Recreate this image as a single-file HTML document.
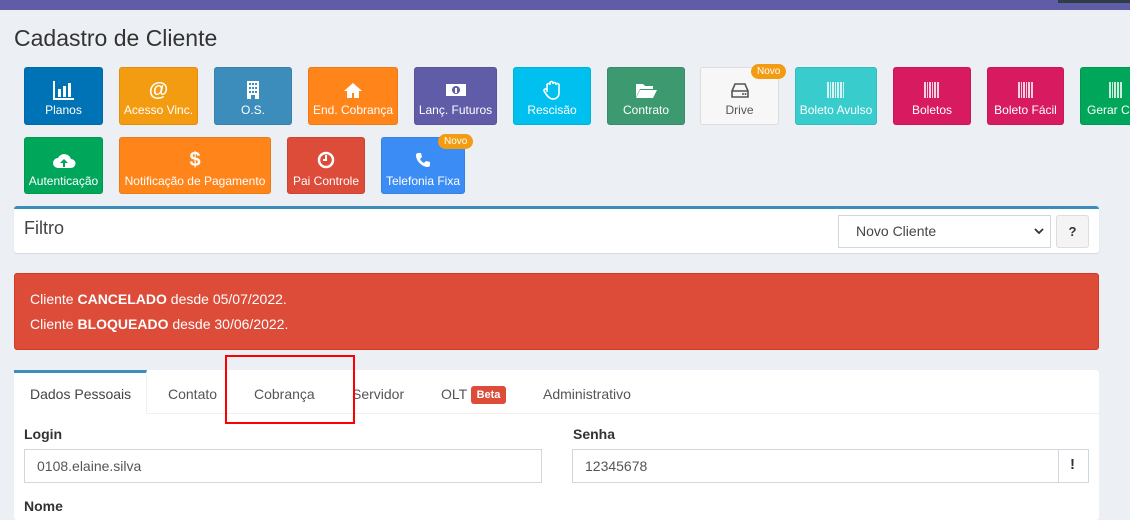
<!DOCTYPE html><html><head><meta charset="utf-8"><style>
*{box-sizing:border-box;margin:0;padding:0}
body{width:1130px;height:510px;overflow:hidden;background:#ecf0f5;font-family:"Liberation Sans",sans-serif;position:relative;color:#333}
.a{position:absolute}
.btn{position:absolute;color:#fff;font-size:12px;text-align:center;border-radius:3px;border:1px solid rgba(0,0,0,.08)}
.btn .ic{position:absolute;left:0;right:0;top:13px;height:18px;display:flex;justify-content:center;align-items:center;font-weight:bold;font-size:17px}
.btn .t{position:absolute;left:0;right:0;top:35px;white-space:nowrap;overflow:hidden}
.r2 .t{top:36px}
.nv{position:absolute;background:#f39c12;color:#fff;font-size:10px;padding:2px 6px;border-radius:8px}
.bar{display:inline-block;width:2px;height:16px;margin-right:1px;background:currentColor;opacity:.8}
</style></head><body>
<div class="a" style="left:0;top:0;width:1130px;height:10px;background:#605ca8"></div>
<div class="a" style="left:1058px;top:0;width:72px;height:3px;background:#2f3d45"></div>
<div class="a" style="left:14px;top:25px;font-size:23px;color:#333">Cadastro de Cliente</div>

<div class="btn" style="left:24px;top:67px;width:79px;height:58px;background:#0073b7"><div class="ic"><svg width="22" height="20" viewBox="0 0 22 20"><path d="M1 1v18h20" stroke="#fff" stroke-width="2" fill="none"/><rect x="5" y="9" width="3" height="8" fill="#fff"/><rect x="10" y="6" width="3" height="11" fill="#fff"/><rect x="15" y="3" width="3" height="14" fill="#fff"/></svg></div><div class="t">Planos</div></div>
<div class="btn" style="left:119px;top:67px;width:79px;height:58px;background:#f39c12"><div class="ic" style="font-size:20px">@</div><div class="t">Acesso Vinc.</div></div>
<div class="btn" style="left:214px;top:67px;width:78px;height:58px;background:#3c8dbc"><div class="ic"><svg width="14" height="20"><rect x="1" y="1" width="12" height="18" fill="#fff"/><g fill="#3c8dbc"><rect x="3" y="3" width="2" height="2"/><rect x="6" y="3" width="2" height="2"/><rect x="9" y="3" width="2" height="2"/><rect x="3" y="7" width="2" height="2"/><rect x="6" y="7" width="2" height="2"/><rect x="9" y="7" width="2" height="2"/><rect x="3" y="11" width="2" height="2"/><rect x="6" y="11" width="2" height="2"/><rect x="9" y="11" width="2" height="2"/><rect x="5" y="15" width="4" height="4"/></g></svg></div><div class="t">O.S.</div></div>
<div class="btn" style="left:308px;top:67px;width:90px;height:58px;background:#ff851b"><div class="ic"><svg width="20" height="17"><path d="M10 1L1 9h3v7h5v-5h2v5h5V9h3z" fill="#fff"/></svg></div><div class="t">End. Cobrança</div></div>
<div class="btn" style="left:414px;top:67px;width:83px;height:58px;background:#605ca8"><div class="ic"><svg width="22" height="14"><rect x="1" y="1" width="20" height="12" fill="#fff"/><circle cx="11" cy="7" r="4" fill="#605ca8"/><rect x="10" y="5" width="2" height="5" fill="#fff"/></svg></div><div class="t">Lanç. Futuros</div></div>
<div class="btn" style="left:513px;top:67px;width:78px;height:58px;background:#00c0ef"><div class="ic"><svg width="18" height="20"><path d="M4 12V5a1.3 1.3 0 013 0V3a1.3 1.3 0 013 0v1a1.3 1.3 0 013 0v1a1.3 1.3 0 013 0v8c0 4-3 6-6 6s-5-2-7-5l-2-3a1.3 1.3 0 013-1z" fill="none" stroke="#fff" stroke-width="1.6"/></svg></div><div class="t">Rescisão</div></div>
<div class="btn" style="left:607px;top:67px;width:78px;height:58px;background:#3d9970"><div class="ic"><svg width="22" height="17"><path d="M1 2h7l2 2h8v3H5L1 15z" fill="#fff"/><path d="M5 8h17l-4 8H1z" fill="#fff"/></svg></div><div class="t">Contrato</div></div>
<div class="btn" style="left:700px;top:67px;width:79px;height:58px;background:#f7f7f7;color:#555;border-color:#ddd"><div class="ic"><svg width="18" height="16"><path d="M4 2h10l3 7v6H1V9z M1 9h16" fill="none" stroke="#555" stroke-width="1.6"/><circle cx="12" cy="12" r="1" fill="#555"/><circle cx="14.5" cy="12" r="1" fill="#555"/></svg></div><div class="t" style="color:#555">Drive</div></div>
<div class="nv" style="left:751px;top:64px">Novo</div>
<div class="btn" style="left:795px;top:67px;width:82px;height:58px;background:#39cccc"><div class="ic"><span class="bar"></span><span class="bar" style="width:1px"></span><span class="bar"></span><span class="bar" style="width:1px"></span><span class="bar"></span><span class="bar"></span><span class="bar" style="width:1px"></span></div><div class="t">Boleto Avulso</div></div>
<div class="btn" style="left:893px;top:67px;width:78px;height:58px;background:#d81b60"><div class="ic"><span class="bar"></span><span class="bar" style="width:1px"></span><span class="bar"></span><span class="bar" style="width:1px"></span><span class="bar"></span><span class="bar"></span></div><div class="t">Boletos</div></div>
<div class="btn" style="left:987px;top:67px;width:77px;height:58px;background:#d81b60"><div class="ic"><span class="bar"></span><span class="bar" style="width:1px"></span><span class="bar"></span><span class="bar" style="width:1px"></span><span class="bar"></span><span class="bar"></span></div><div class="t">Boleto Fácil</div></div>
<div class="btn" style="left:1080px;top:67px;width:80px;height:58px;background:#00a65a;text-align:left"><div class="ic" style="justify-content:flex-start;padding-left:28px"><span class="bar"></span><span class="bar" style="width:1px"></span><span class="bar"></span><span class="bar"></span><span class="bar"></span></div><div class="t" style="left:6px">Gerar C</div></div>

<div class="btn r2" style="left:24px;top:137px;width:79px;height:57px;background:#00a65a"><div class="ic"><svg width="24" height="17"><path d="M6 16a5 5 0 010-10 7 7 0 0113 1 4.5 4.5 0 010 9z" fill="#fff"/><path d="M12 7l-4 4h3v4h2v-4h3z" fill="#00a65a"/></svg></div><div class="t">Autenticação</div></div>
<div class="btn r2" style="left:119px;top:137px;width:152px;height:57px;background:#ff851b"><div class="ic" style="font-size:20px">$</div><div class="t">Notificação de Pagamento</div></div>
<div class="btn r2" style="left:287px;top:137px;width:78px;height:57px;background:#dd4b39"><div class="ic"><svg width="18" height="18"><circle cx="9" cy="9" r="7" fill="none" stroke="#fff" stroke-width="2.5"/><path d="M9 4v5H6" stroke="#fff" stroke-width="2" fill="none"/></svg></div><div class="t">Pai Controle</div></div>
<div class="btn r2" style="left:381px;top:137px;width:84px;height:57px;background:#3c8cf5"><div class="ic"><svg width="16" height="16"><path d="M3 1l3 0 1 4-2 2c1 2 2 3 4 4l2-2 4 1v3c0 1-1 2-2 2C7 15 1 9 1 3c0-1 1-2 2-2z" fill="#fff"/></svg></div><div class="t">Telefonia Fixa</div></div>
<div class="nv" style="left:438px;top:134px">Novo</div>

<div class="a" style="left:14px;top:206px;width:1085px;height:47px;background:#fff;border-top:3px solid #3c8dbc;border-radius:3px;box-shadow:0 1px 1px rgba(0,0,0,.1)"></div>
<div class="a" style="left:24px;top:218px;font-size:18px;color:#444">Filtro</div>
<div class="a" style="left:838px;top:215px;width:213px;height:33px;border:1px solid #d2d6de;background:#fff;font-size:14px;padding:7px 0 0 17px;color:#444">Novo Cliente<svg class="a" style="left:195px;top:12px" width="10" height="8"><path d="M1 1l4 4 4-4" stroke="#333" stroke-width="1.8" fill="none"/></svg></div>
<div class="a" style="left:1056px;top:215px;width:33px;height:33px;border:1px solid #ddd;background:#f4f4f4;border-radius:3px;font-size:13px;font-weight:bold;text-align:center;line-height:31px;color:#333">?</div>

<div class="a" style="left:14px;top:273px;width:1085px;height:77px;background:#dd4b39;border:1px solid #d73925;border-radius:3px;color:#fff;font-size:14px;padding:13px 0 0 15px;line-height:25px">Cliente <b>CANCELADO</b> desde 05/07/2022.<br>Cliente <b>BLOQUEADO</b> desde 30/06/2022.</div>

<div class="a" style="left:14px;top:370px;width:1085px;height:150px;background:#fff;border-radius:3px"></div>
<div class="a" style="left:147px;top:413px;width:952px;height:1px;background:#f0f0f0"></div>
<div class="a" style="left:14px;top:370px;width:133px;height:44px;border-top:3px solid #3c8dbc;border-right:1px solid #f0f0f0"></div>
<div class="a" style="top:386px;font-size:14px;color:#444;left:30px">Dados Pessoais</div>
<div class="a" style="top:386px;font-size:14px;color:#555;left:168px">Contato</div>
<div class="a" style="top:386px;font-size:14px;color:#555;left:254px">Cobrança</div>
<div class="a" style="top:386px;font-size:14px;color:#555;left:352px">Servidor</div>
<div class="a" style="top:386px;font-size:14px;color:#555;left:441px">OLT</div>
<div class="a" style="top:386px;left:471px;width:35px;height:18px;background:#dd4b39;color:#fff;font-size:11px;font-weight:bold;text-align:center;line-height:18px;border-radius:3px">Beta</div>
<div class="a" style="top:386px;font-size:14px;color:#555;left:543px">Administrativo</div>
<div class="a" style="left:225px;top:355px;width:130px;height:69px;border:2px solid #ff0000"></div>

<div class="a" style="left:24px;top:426px;font-size:14px;font-weight:bold;color:#333">Login</div>
<div class="a" style="left:24px;top:449px;width:518px;height:34px;border:1px solid #d2d6de;font-size:14px;padding:8px 12px;color:#555">0108.elaine.silva</div>
<div class="a" style="left:573px;top:426px;font-size:14px;font-weight:bold;color:#333">Senha</div>
<div class="a" style="left:572px;top:449px;width:517px;height:34px;border:1px solid #d2d6de;font-size:14px;padding:8px 12px;color:#555">12345678</div>
<div class="a" style="left:1058px;top:449px;width:1px;height:34px;background:#d2d6de"></div>
<div class="a" style="left:1070px;top:456px;font-size:15px;font-weight:bold;color:#333">!</div>
<div class="a" style="left:24px;top:498px;font-size:14px;font-weight:bold;color:#333">Nome</div>
</body></html>
